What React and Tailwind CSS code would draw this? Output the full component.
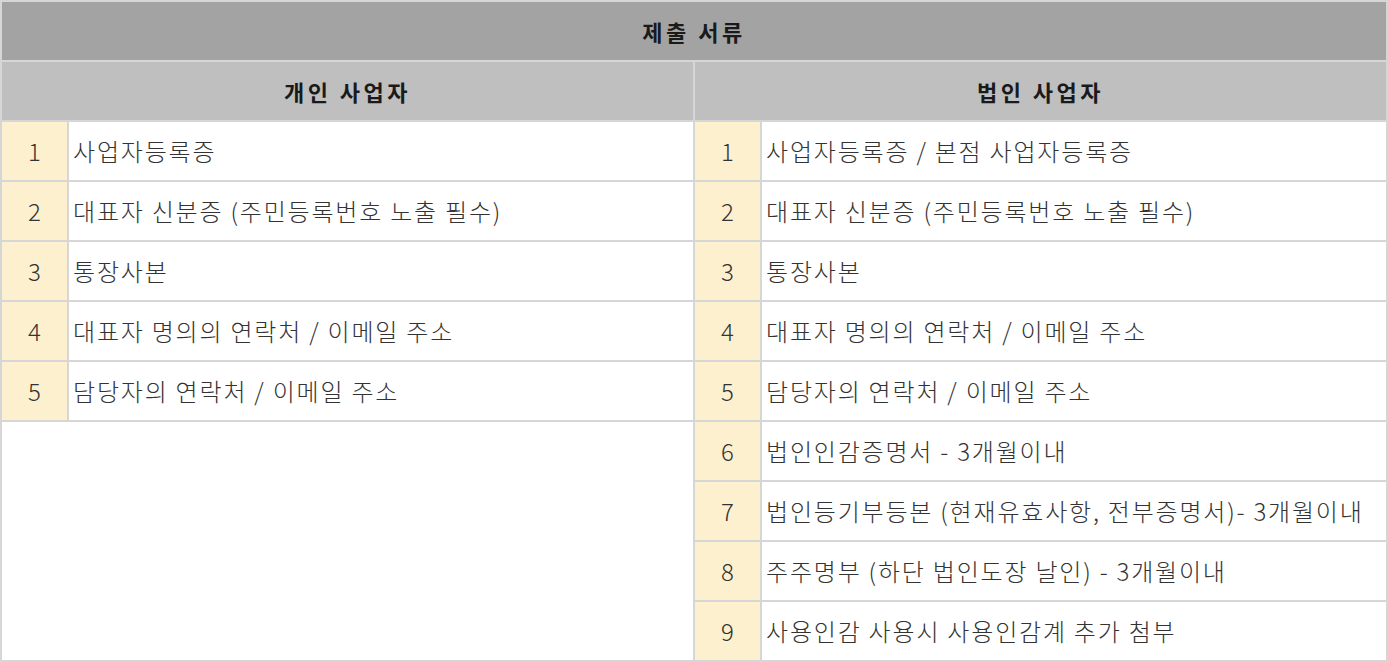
import React from "react";

const personal = [
  "사업자등록증",
  "대표자 신분증 (주민등록번호 노출 필수)",
  "통장사본",
  "대표자 명의의 연락처 / 이메일 주소",
  "담당자의 연락처 / 이메일 주소",
];

const corporate = [
  "사업자등록증 / 본점 사업자등록증",
  "대표자 신분증 (주민등록번호 노출 필수)",
  "통장사본",
  "대표자 명의의 연락처 / 이메일 주소",
  "담당자의 연락처 / 이메일 주소",
  "법인인감증명서 - 3개월이내",
  "법인등기부등본 (현재유효사항, 전부증명서)- 3개월이내",
  "주주명부 (하단 법인도장 날인) - 3개월이내",
  "사용인감 사용시 사용인감계 추가 첨부",
];

const NumCell = ({ n }) => (
  <div className="bg-[#fcf0cf] flex items-center justify-center">{n}</div>
);

const TextCell = ({ children }) => (
  <div className="bg-white flex items-center pl-[4px] whitespace-nowrap tracking-[1.8px]">{children}</div>
);

const App = () => {
  const rows = [];
  corporate.forEach((item, i) => {
    if (i < personal.length) {
      rows.push(<NumCell key={`pn${i}`} n={i + 1} />);
      rows.push(<TextCell key={`pt${i}`}>{personal[i]}</TextCell>);
    } else if (i === personal.length) {
      rows.push(<div key="empty" className="bg-white col-span-2 row-span-4" />);
    }
    rows.push(<NumCell key={`cn${i}`} n={i + 1} />);
    rows.push(<TextCell key={`ct${i}`}>{item}</TextCell>);
  });

  return (
    <div
      className="w-[1388px] h-[662px] bg-[#d6d6d6] p-[2px] grid grid-cols-[65px_1fr_65px_1fr] auto-rows-[58px] gap-[2px] text-[24px] font-light text-[#333333] overflow-hidden"
      style={{ fontFamily: '"Noto Sans CJK KR", "Noto Sans", sans-serif' }}
    >
      <div className="col-span-4 bg-[#a3a3a3] flex items-center justify-center font-bold text-[22px] tracking-[3.5px] text-[#1a1a1a]">
        제출 서류
      </div>
      <div className="col-span-2 bg-[#bfbfbf] flex items-center justify-center font-bold text-[22px] tracking-[3.5px] text-[#1a1a1a]">
        개인 사업자
      </div>
      <div className="col-span-2 bg-[#bfbfbf] flex items-center justify-center font-bold text-[22px] tracking-[3.5px] text-[#1a1a1a]">
        법인 사업자
      </div>
      {rows}
    </div>
  );
};

export default App;
